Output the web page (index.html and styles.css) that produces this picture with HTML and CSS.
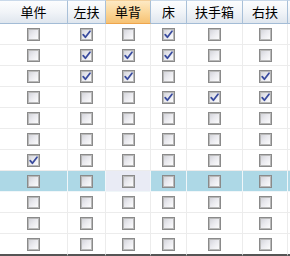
FILE: index.html
```html
<!DOCTYPE html>
<html>
<head>
<meta charset="utf-8">
<link rel="stylesheet" href="styles.css">
</head>
<body>
<div class="grid">
  <div class="hd">单件</div>
  <div class="hd">左扶</div>
  <div class="hd hd-active">单背</div>
  <div class="hd">床</div>
  <div class="hd">扶手箱</div>
  <div class="hd">右扶</div>
  <div class="hd hd-end"></div>
</div>
<div class="grid body" id="body"></div>
<script>
var data = [
  [0,1,0,1,0,0],
  [0,1,1,1,0,0],
  [0,1,1,0,0,1],
  [0,0,0,1,1,1],
  [0,0,0,0,0,0],
  [0,0,0,0,0,0],
  [1,0,0,0,0,0],
  [0,0,0,0,0,0],
  [0,0,0,0,0,0],
  [0,0,0,0,0,0],
  [0,0,0,0,0,0]
];
var check = '<svg viewBox="0 0 13 13" width="13" height="13"><path d="M3.2 6.6 L5.4 9.3 L10 3.2" fill="none" stroke="#3a4c9e" stroke-width="1.8" stroke-linecap="round" stroke-linejoin="round"/></svg>';
var html = '';
data.forEach(function (row, r) {
  var cls = 'cell';
  if (r === 7) cls += ' sel';
  if (r === data.length - 1) cls += ' last';
  row.forEach(function (v, c) {
    var extra = (r === 7 && c === 2) ? ' selcol' : '';
    html += '<div class="' + cls + extra + '"><span class="cb">' + (v ? check : '') + '</span></div>';
  });
  html += '<div class="' + cls + ' end"></div>';
});
document.getElementById('body').innerHTML = html;
</script>
</body>
</html>
```
FILE: styles.css
```css
html, body {
  margin: 0;
  padding: 0;
  background: #fff;
  overflow: hidden;
  width: 290px;
  height: 256px;
}
.grid {
  display: grid;
  grid-template-columns: 68px 38px 45px 36px 56px 45px 2px;
  width: 290px;
}
.hd {
  box-sizing: border-box;
  height: 24px;
  border-top: 1px solid #c9d9ea;
  border-right: 1px solid #a9c0d8;
  border-bottom: 1px solid #a3bcd6;
  background: linear-gradient(#fcfdfe, #f1f4f8 50%, #dfe6ee);
  font-family: "Noto Sans CJK SC", "Noto Sans", sans-serif;
  font-size: 13px;
  line-height: 21px;
  color: #000;
  text-align: center;
}
.hd-end {
  border-right: none;
}
.hd-active {
  background: linear-gradient(#fde9c4, #fbd79a 50%, #f6c274);
  border-bottom-color: #eea54c;
  border-top-color: #f3cf9a;
}
.cell {
  box-sizing: border-box;
  height: 21px;
  border-right: 1px solid #ececec;
  border-bottom: 1px solid #ececec;
  display: flex;
  align-items: center;
  justify-content: center;
  background: #fff;
}
.cell.end {
  border-right: none;
}
.cell.sel {
  background: #add8e6;
  border-right-color: #f0f6f9;
  border-bottom-color: #f0f6f9;
}
.cell.selcol {
  background: #e9ebf5;
}
.cell.last {
  height: 22px;
  border-bottom: 2px solid #555;
}
.cb {
  box-sizing: border-box;
  width: 13px;
  height: 13px;
  border: 1px solid #8a8a8a;
  box-shadow: inset 0 0 0 1px #b9b9b9;
  background: linear-gradient(135deg, #cfd0d6 0%, #e9e9ee 45%, #ffffff 100%);
  position: relative;
}
.cb svg {
  position: absolute;
  left: -1px;
  top: -1px;
}
```
